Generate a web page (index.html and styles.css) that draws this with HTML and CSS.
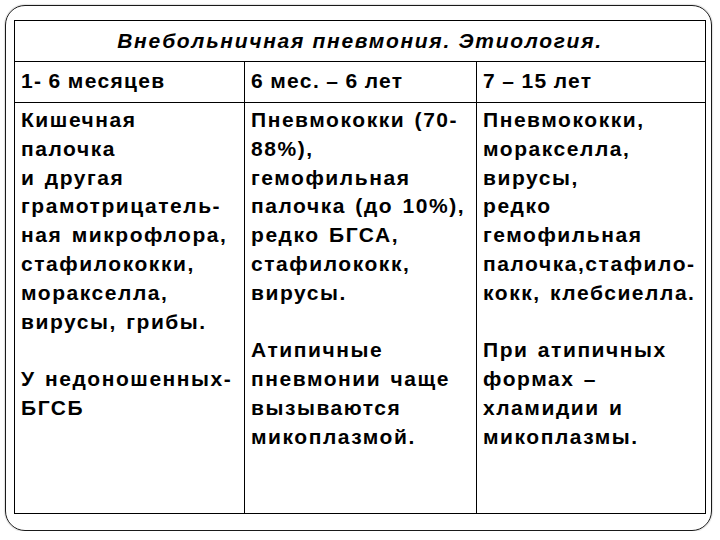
FILE: index.html
```html
<!DOCTYPE html>
<html lang="ru">
<head>
<meta charset="utf-8">
<title>Внебольничная пневмония. Этиология.</title>
<link rel="stylesheet" href="styles.css">
</head>
<body>
<div class="frame">
  <div class="grid">
    <div class="cell title">Внебольничная пневмония. Этиология.</div>
    <div class="cell head">1- 6 месяцев</div>
    <div class="cell head">6 мес. – 6 лет</div>
    <div class="cell head">7 – 15 лет</div>
    <div class="cell body">Кишечная<br>палочка<br>и другая<br>грамотрицатель-<br>ная микрофлора,<br>стафилококки,<br>моракселла,<br>вирусы, грибы.<br><br>У недоношенных-<br>БГСБ</div>
    <div class="cell body">Пневмококки (70-<br>88%),<br>гемофильная<br>палочка (до 10%),<br>редко БГСА,<br>стафилококк,<br>вирусы.<br><br>Атипичные<br>пневмонии чаще<br>вызываются<br>микоплазмой.</div>
    <div class="cell body">Пневмококки,<br>моракселла,<br>вирусы,<br>редко<br>гемофильная<br>палочка,стафило-<br>кокк, клебсиелла.<br><br>При атипичных<br>формах –<br>хламидии и<br>микоплазмы.</div>
  </div>
</div>
</body>
</html>
```

FILE: styles.css
```css
html, body {
  margin: 0;
  padding: 0;
  background: #ffffff;
}
body {
  padding: 5px 0 0 5px;
  font-family: "Liberation Sans", Arial, sans-serif;
  color: #000;
}
.frame {
  box-sizing: border-box;
  width: 707px;
  height: 526px;
  border: 1px solid #1a1a1a;
  border-radius: 20px;
  padding: 14px 0 0 8px;
  box-shadow: 0 0 1px 1px rgba(0,0,0,0.12);
}
.grid {
  box-sizing: border-box;
  width: 692px;
  height: 494px;
  display: grid;
  grid-template-columns: 230px 232px 229px;
  grid-template-rows: 41px 41px 411px;
  border-left: 1px solid #000;
  border-top: 1px solid #000;
}
.cell {
  border-right: 1px solid #000;
  border-bottom: 1px solid #000;
  font-weight: bold;
  font-size: 21px;
  line-height: 28.8px;
  letter-spacing: 1.55px;
  word-spacing: 2px;
  white-space: nowrap;
  overflow: hidden;
}
.title {
  grid-column: 1 / 4;
  font-style: italic;
  font-size: 21px;
  letter-spacing: 1.7px;
  word-spacing: 0;
  line-height: 40px;
  text-align: center;
}
.head {
  padding: 5px 0 0 6px;
  letter-spacing: 1.35px;
  word-spacing: -1px;
}
.body {
  padding: 3px 0 0 6px;
}
```
